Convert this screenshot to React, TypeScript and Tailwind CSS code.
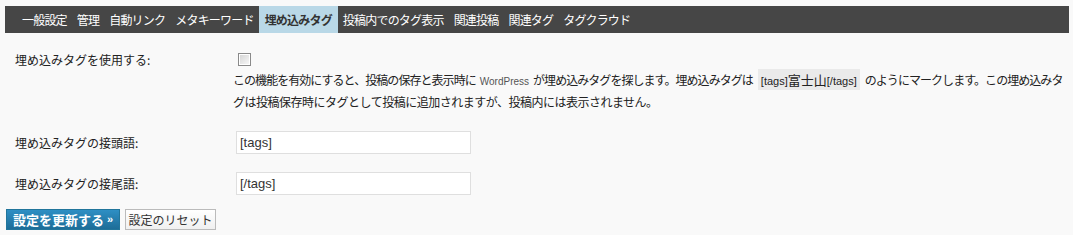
import React from "react";

const tabs = [
  "一般設定",
  "管理",
  "自動リンク",
  "メタキーワード",
  "埋め込みタグ",
  "投稿内でのタグ表示",
  "関連投稿",
  "関連タグ",
  "タグクラウド",
];

const jp = "font-['Noto_Sans_CJK_JP','Noto_Sans',sans-serif]";

export default function App() {
  return (
    <div
      className={`min-h-[235px] w-[1073px] bg-[#f9f9f9] px-[5px] pt-[6px] text-[12px] text-[#222] ${jp}`}
    >
      <div className="flex h-[27px] w-[1064px] items-stretch bg-[#464646] pl-[12px] tracking-[-0.8px]">
        {tabs.map((t, i) => (
          <div
            key={t}
            className={
              i === 4
                ? "flex items-center bg-[#b9d8e7] px-[6px] font-bold text-[#333]"
                : "flex items-center px-[5px] text-white"
            }
          >
            {t}
          </div>
        ))}
      </div>

      <div className="flex pt-[17px]">
        <div className="w-[228px] shrink-0 pl-[10px] leading-[20px]">埋め込みタグを使用する:</div>
        <div className="flex flex-col">
          <div className="ml-[5px] mt-[3px] flex h-[13px] w-[13px] items-center justify-center border border-[#8a8a8a] bg-white">
            <div className="h-[9px] w-[9px] bg-gradient-to-br from-[#d6d6d6] to-[#f6f6f6]" />
          </div>
          <div className="mt-[4px] whitespace-nowrap leading-[20px] text-[#222]">
            <div className="tracking-[-0.95px]">
              この機能を有効にすると、投稿の保存と表示時に
              <span className="mx-[4px] font-['Liberation_Sans',sans-serif] text-[10px] tracking-normal text-[#555]">WordPress</span>
              が埋め込みタグを探します。埋め込みタグは
              <span className="mx-[5px] bg-[#eaeaea] px-[3px] py-[2px] tracking-normal">
                <span className="font-['Liberation_Sans',sans-serif] text-[11px]">[tags]</span>
                <span className="text-[13px]">富士山</span>
                <span className="font-['Liberation_Sans',sans-serif] text-[11px]">[/tags]</span>
              </span>
              のようにマークします。この埋め込みタ
            </div>
            <div className="tracking-[-0.5px]">グは投稿保存時にタグとして投稿に追加されますが、投稿内には表示されません。</div>
          </div>
        </div>
      </div>

      <div className="flex items-center pt-[19px]">
        <div className="w-[231px] shrink-0 pl-[10px] leading-[20px]">埋め込みタグの接頭語:</div>
        <div className="flex h-[23px] w-[235px] items-center border border-[#dfdfdf] bg-white pl-[3px] font-['Liberation_Sans',sans-serif] text-[13px] text-[#333]">
          [tags]
        </div>
      </div>

      <div className="flex items-center pt-[18px]">
        <div className="w-[231px] shrink-0 pl-[10px] leading-[20px]">埋め込みタグの接尾語:</div>
        <div className="flex h-[23px] w-[235px] items-center border border-[#dfdfdf] bg-white pl-[3px] font-['Liberation_Sans',sans-serif] text-[13px] text-[#333]">
          [/tags]
        </div>
      </div>

      <div className="flex items-center gap-[5px] pl-[1px] pt-[14px]">
        <div className="flex h-[21px] w-[114px] items-center justify-center border border-[#21759b] bg-gradient-to-b from-[#2e8fc4] to-[#1d6d98] text-[13px] font-bold text-white">
          設定を更新する <span className="ml-[3px] font-['Liberation_Sans',sans-serif] text-[11px]">»</span>
        </div>
        <div className="flex h-[21px] w-[91px] items-center justify-center border border-[#bbb] bg-gradient-to-b from-white to-[#f0f0f0] text-[12px] text-[#333]">
          設定のリセット
        </div>
      </div>
    </div>
  );
}
